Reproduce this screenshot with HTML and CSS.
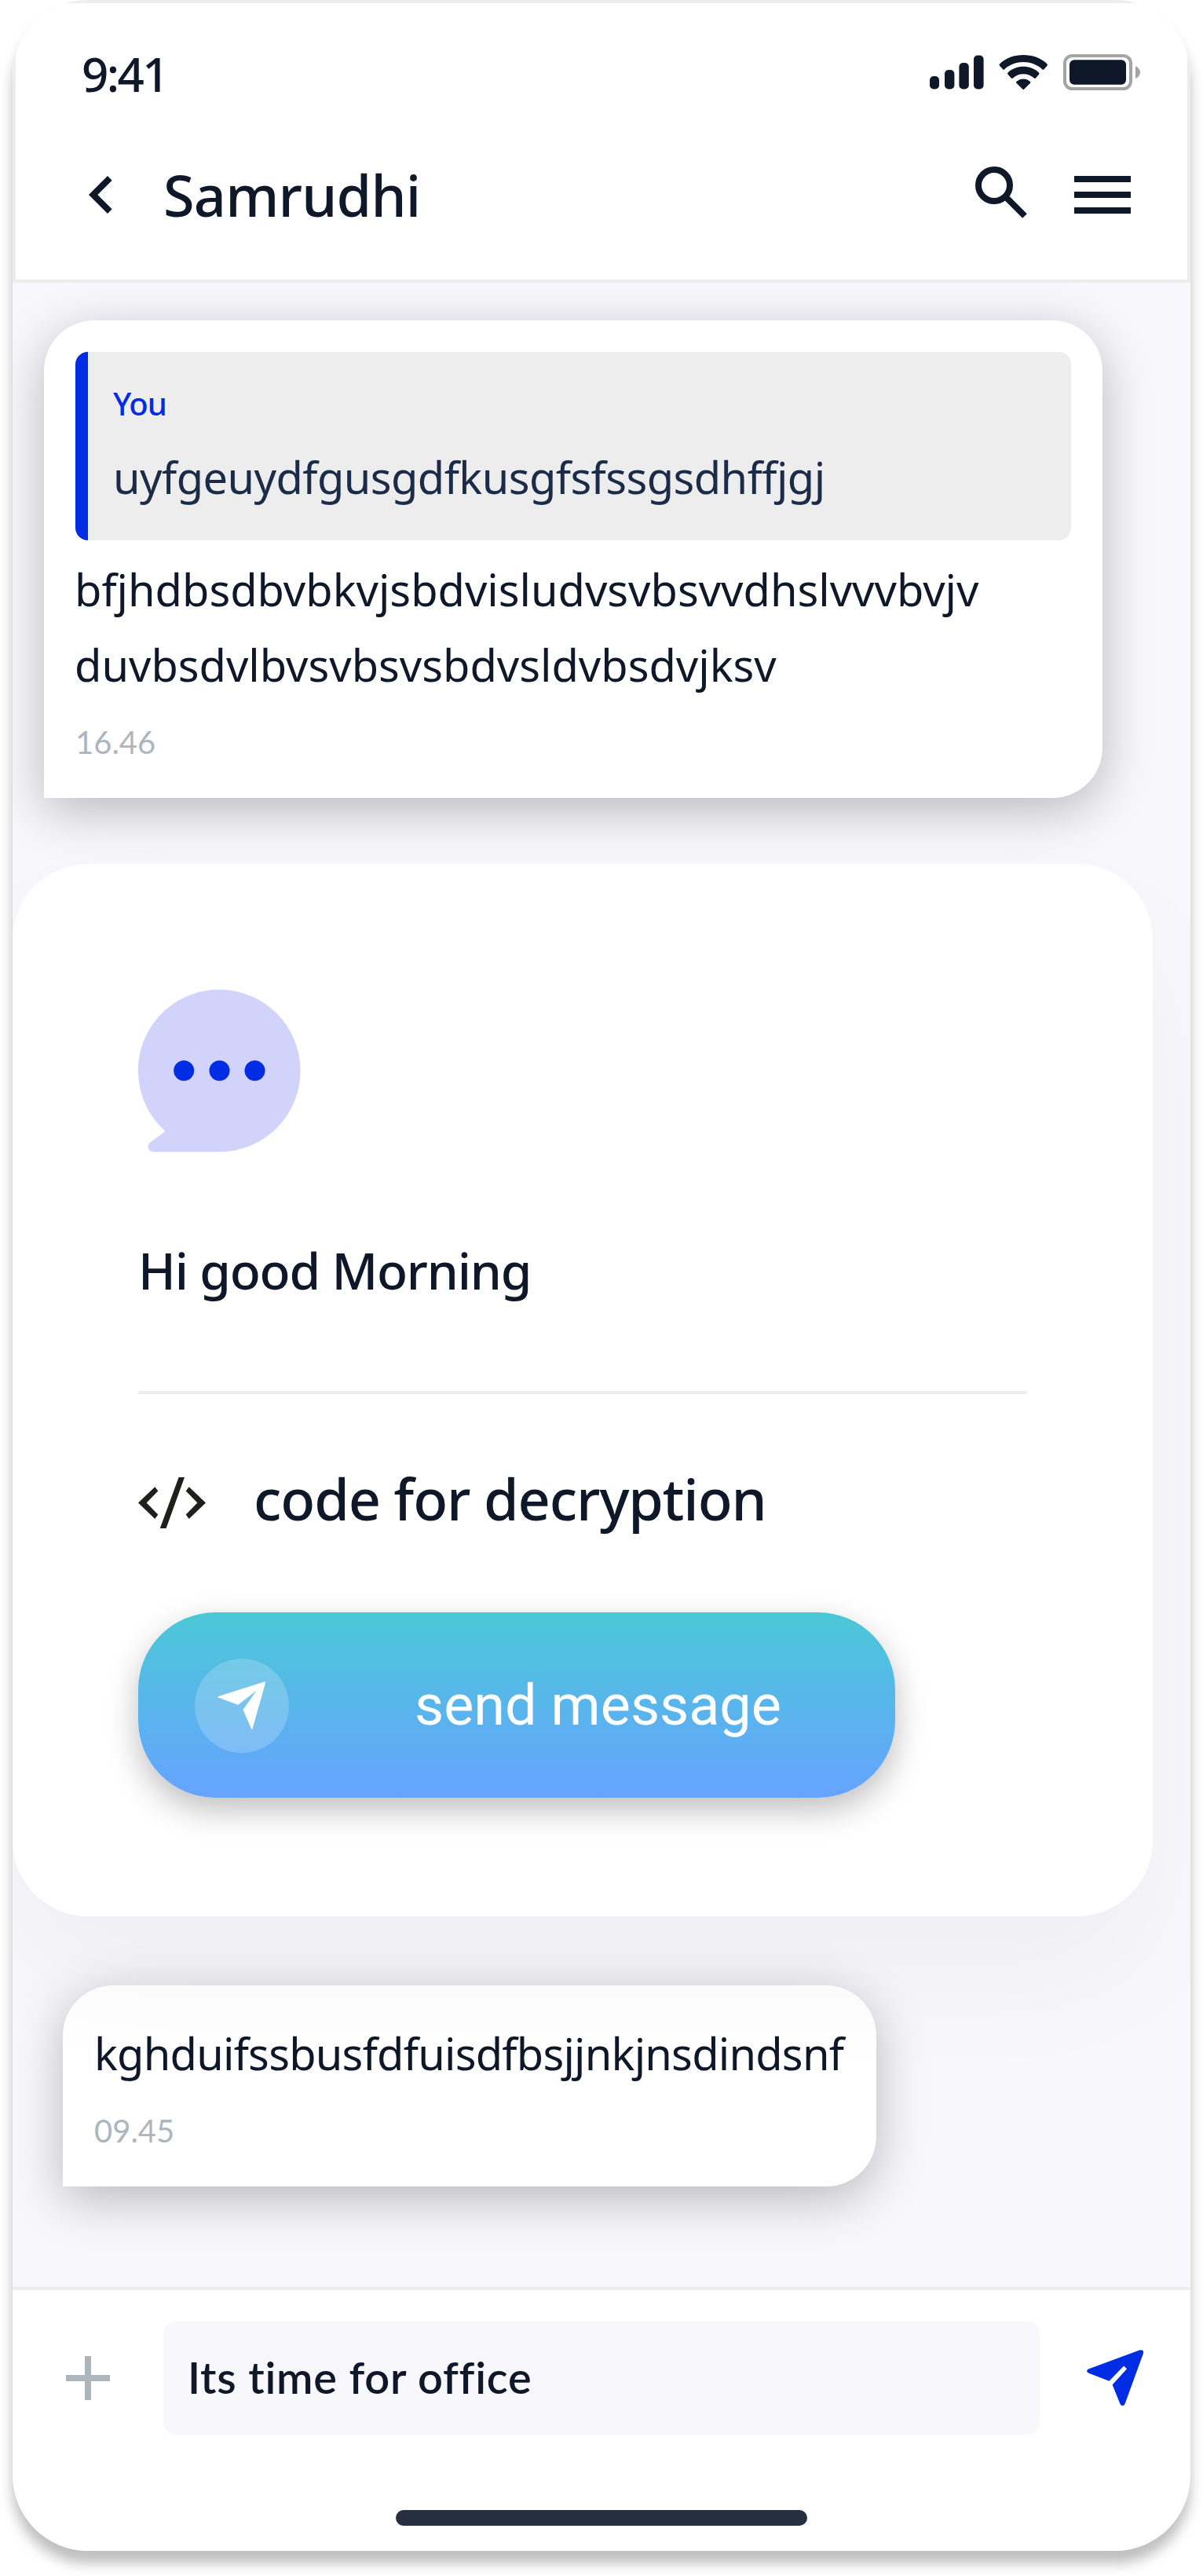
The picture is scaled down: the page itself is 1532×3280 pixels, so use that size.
FILE: index.html
```html
<!DOCTYPE html>
<html lang="en">
<head>
<meta charset="utf-8">
<title>Samrudhi</title>
<link rel="stylesheet" href="styles.css">
</head>
<body>
<main class="phone">
  <header class="header">
    <div class="status">
      <span class="clock">9:41</span>
      <svg class="status-icons" width="268" height="46" viewBox="1184 69 268 46" fill="#0f1828">
        <rect x="1184" y="97" width="12" height="16.500" rx="5"/>
        <rect x="1203" y="89" width="12.400" height="24.500" rx="5"/>
        <rect x="1221.400" y="80" width="12.400" height="33.500" rx="5"/>
        <rect x="1240" y="70.500" width="12.600" height="43" rx="5"/>
        <path d="M1273 83.800Q1272 82.500 1273 81.500C1288 66.200 1318.500 66.200 1333.500 81.500Q1334.500 82.500 1333.500 83.800L1329.300 88.400Q1328.500 89.300 1327.500 88.400C1314 76 1292.500 76 1279 88.400Q1278.200 89.300 1277.400 88.400Z"/>
        <path d="M1283.500 94.700Q1282.500 93.600 1283.500 92.500C1294.500 82.300 1312 82.300 1323 92.500Q1324 93.600 1323 94.700L1319 99.500Q1318 100.300 1317 99.500C1309 92.500 1297.500 92.500 1289.800 99.500Q1288.800 100.300 1287.800 99.500Z"/>
        <path d="M1294.300 105.700Q1293.600 104.800 1294.600 103.800C1299.500 99.300 1307 99.300 1311.800 103.800Q1312.900 104.800 1312.100 105.700L1304 113.800Q1303.200 114.400 1302.500 113.800Z"/>
        <rect x="1356" y="71" width="84" height="42" rx="9.500" fill="none" stroke="#a4a4a4" stroke-width="4"/>
        <rect x="1362" y="76.300" width="72" height="31.400" rx="6"/>
        <path d="M1446 84Q1452 87 1452 92T1446 100Z" fill="#a4a4a4"/>
      </svg>
    </div>
    <div class="titlebar">
      <svg width="96" height="96" viewBox="0 0 24 24" fill="#0f1828"><path d="M15.410 7.410 14 6l-6 6 6 6 1.410-1.410L10.830 12z"/></svg>
      <h1 class="name">Samrudhi</h1>
      <div class="actions">
        <svg width="66" height="66" viewBox="0 0 66 66" fill="none" stroke="#0f1828" stroke-width="8"><circle cx="24" cy="24" r="20"/><path d="M38 38 63 63"/></svg>
        <svg width="72" height="48" viewBox="0 0 72 48" fill="#0f1828"><path d="M0 0h72v8H0zM0 20h72v8H0zM0 40h72v8H0z"/></svg>
      </div>
    </div>
  </header>

  <section class="chat">
    <article class="bubble bubble-reply">
      <blockquote class="quote">
        <p class="quote-author">You</p>
        <p class="quote-text">uyfgeuydfgusgdfkusgfsfssgsdhffjgj</p>
      </blockquote>
      <p class="text reply-text">bfjhdbsdbvbkvjsbdvisludvsvbsvvdhslvvvbvjv<br>duvbsdvlbvsvbsvsbdvsldvbsdvjksv</p>
      <time class="time">16.46</time>
    </article>

    <article class="panel">
      <svg class="panel-icon" width="207" height="207" viewBox="0 0 207 207">
        <path d="M103.300 0a103.300 103.300 0 0 1 0 206.700H19.500c-6.500 0-9.200-8.200-4.500-12L34.500 180.500A103.300 103.300 0 0 1 103.300 0z" fill="#d2d3fa"/>
        <g fill="#002de3"><circle cx="58.200" cy="103.300" r="13"/><circle cx="103.500" cy="103.300" r="13"/><circle cx="148.500" cy="103.300" r="13"/></g>
      </svg>
      <h2 class="panel-title">Hi good Morning</h2>
      <hr class="divider">
      <div class="code-row">
        <svg width="86" height="65" viewBox="0 0 86 65" fill="#1f1f1d"><path d="M21.300 12.300 25.300 17.400 10.600 32.500 25.300 47.600 21.300 52.900 0 32.500zM64.700 12.300 60.700 17.400 75.400 32.500 60.700 47.600 64.700 52.900 86 32.500zM51.600 0H59L35.600 65H27.800z"/></svg>
        <span class="code-label">code for decryption</span>
      </div>
      <button class="send-button" type="button">
        <span class="send-disc">
          <svg width="62" height="62" viewBox="0 0 62 62" fill="#fff"><path d="M1 20.500Q-.8 19.800 1 19L59.200.4Q61.500-.2 61 2L44.600 60Q43.800 62 43 60L32.500 36 49.800 11.500 26.200 29.800z"/></svg>
        </span>
        <span>send message</span>
      </button>
    </article>

    <article class="bubble bubble-short">
      <p class="text short-text">kghduifssbusfdfuisdfbsjjnkjnsdindsnf</p>
      <time class="time short-time">09.45</time>
    </article>
  </section>

  <footer class="composer">
    <div class="composer-row">
      <svg width="56" height="56" viewBox="0 0 56 56" fill="#adb5bd"><path d="M24 0h8v24h24v8H32v24h-8V32H0v-8h24z"/></svg>
      <div class="input">Its time for office</div>
      <svg width="72" height="72" viewBox="0 0 72 72" fill="#002de3"><path d="M2 29.500Q-1.800 26.800 2 24.500L67 .5Q73-1 72 4.500L48.500 69Q45.500 73.500 42.500 69L32.600 44.400 51 24.300 47.200 20.500 28.500 39.700z"/></svg>
    </div>
    <div class="home-bar"></div>
  </footer>
</main>
</body>
</html>
```
FILE: styles.css
```css
* { box-sizing: border-box; margin: 0; padding: 0; }
body { background: #fff; height: 3280px; font-family: "Noto Sans", "Liberation Sans", sans-serif; color: #0f1828; }
svg { display: block; flex: none; overflow: visible; }
.phone {
  width: 1500px; height: 3248px; margin: 0 16px;
  display: flex; flex-direction: column;
  background: #fff; border-radius: 96px; overflow: hidden;
  box-shadow: 0 16px 16px rgba(0, 0, 0, .25);
}

.header { height: 360px; flex: none; border: 4px solid #ededed; background: #fff; }
.status { display: flex; justify-content: space-between; height: 172px; padding: 59px 60px 0 84px; }
.clock { font-size: 60px; font-weight: 500; line-height: 62px; letter-spacing: -2.6px; }
.status-icons { margin-top: 6px; }
.titlebar { display: flex; align-items: center; height: 96px; margin-top: 24px; padding: 0 72px 0 61px; }
.name { margin-left: 31px; font-size: 72px; font-weight: 500; line-height: 96px; letter-spacing: -.8px; white-space: nowrap; }
.actions { display: flex; align-items: center; gap: 60px; margin-left: auto; }
.actions svg:first-child { margin-top: -6px; }

.chat { height: 2552px; flex: none; padding-top: 48px; background: #f7f7fc; overflow: hidden; }
.bubble { background: #fff; border-radius: 64px 64px 64px 0; padding: 40px; box-shadow: 0 16px 64px rgba(0, 0, 0, .25); }
.bubble-reply { width: 1348px; height: 608px; margin-left: 40px; }
.quote { height: 240px; padding: 36px 32px 0; border-left: 16px solid #002de3; border-radius: 16px; background: #ededed; }
.quote-author { color: #002de3; font-size: 40px; font-weight: 500; line-height: 60px; letter-spacing: -1px; }
.quote-text { margin-top: 15px; color: #1b2b48; font-size: 56px; line-height: 96px; letter-spacing: -.6px; }
.text { font-size: 56px; line-height: 96px; white-space: nowrap; }
.reply-text { margin-top: 14px; margin-left: -1px; letter-spacing: -.04px; }
.time { display: block; margin-top: 21px; color: #adb5bd; font: 400 40px/60px Lato, sans-serif; }

.panel {
  position: relative; z-index: 1;
  width: 1452px; height: 1340px; margin-top: 84px; padding: 160px;
  border-radius: 96px; background: #fff; box-shadow: 0 80px 160px rgba(0, 0, 0, .04);
}
.panel-title { margin-top: 111px; font-size: 64px; font-weight: 500; line-height: 80px; letter-spacing: -1.2px; }
.divider { height: 4px; margin-top: 113px; border: 0; background: #ededed; }
.code-row { display: flex; align-items: flex-start; gap: 61px; margin-top: 85px; }
.code-row svg { margin-top: 21px; }
.code-label { font-size: 72px; font-weight: 500; line-height: 96px; letter-spacing: -1.1px; }
.send-button {
  display: flex; align-items: center; gap: 160px;
  width: 964px; height: 236px; margin-top: 97px; padding: 2px 0 0 72px;
  border: 0; border-radius: 98px; background: linear-gradient(#4bc8d7, #66a3ff);
  box-shadow: 0 16px 40px rgba(0, 0, 0, .25);
  color: #fff; font: 400 72px/96px Roboto, sans-serif;
}
.send-disc { display: flex; align-items: center; justify-content: center; width: 120px; height: 120px; border-radius: 50%; background: rgba(255, 255, 255, .2); }

.bubble-short { width: 1036px; height: 256px; margin: 88px 0 0 64px; padding-top: 38px; }
.short-text { letter-spacing: -.8px; }
.short-time { margin-top: 21px; }

.composer { flex: 1; border-top: 4px solid #ededed; }
.composer-row { display: flex; align-items: center; padding: 40px 60px 0 68px; }
.input { width: 1116px; height: 144px; margin: 0 60px 0 68px; padding-left: 31px; border-radius: 16px; background: #f7f7fc; font-family: Lato, sans-serif; font-size: 56px; font-weight: 600; line-height: 142px; letter-spacing: .75px; }
.home-bar { width: 524px; height: 20px; margin: 96px auto 0; border-radius: 10px; background: #262f3f; }
```
